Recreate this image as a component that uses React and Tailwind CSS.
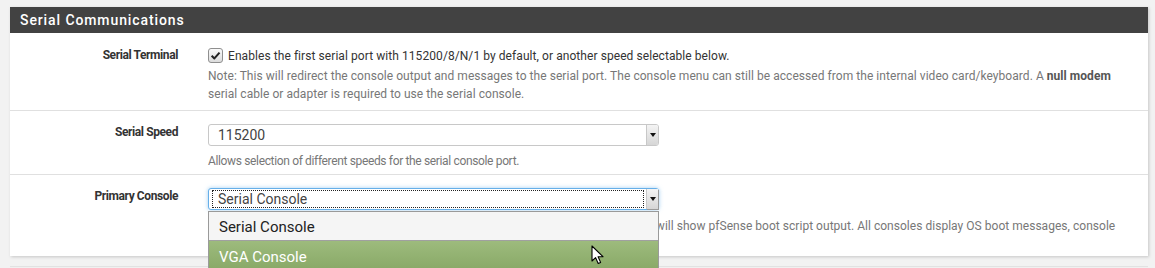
const font = { fontFamily: "Roboto, 'Liberation Sans', sans-serif" };

const Arrow = () => (
    <div className="flex h-full w-[12px] shrink-0 items-center justify-center border-l border-[#c8c8c8] bg-gradient-to-b from-[#f4f4f4] to-[#d6d6d6] shadow-[1px_1px_0_#9a9a9a]">
        <div className="h-0 w-0 border-x-[3px] border-t-[4px] border-x-transparent border-t-[#111]"></div>
    </div>
);

const Label = ({ children }) => (
    <div className="w-[168px] shrink-0 text-right text-[12px] leading-[14px] font-bold tracking-[-0.4px] text-[#333]">
        {children}
    </div>
);

const App = () => {
    return (
        <div className="h-[268px] w-[1155px] overflow-hidden bg-[#f2f2f2] pt-[7px] pl-[10px]" style={font}>
            <div className="relative w-[1138px] bg-white shadow-[1px_1px_3px_rgba(0,0,0,0.18)]">
                <div className="flex h-[26px] items-center bg-[#424242] px-[10px] text-[14px] font-medium tracking-[0.9px] text-white">
                    Serial Communications
                </div>

                {/* serial terminal */}
                <div className="flex border-b border-[#e0e0e0] pt-[14px] pb-[7px]">
                    <div className="pt-[1px]">
                        <Label>Serial Terminal</Label>
                    </div>
                    <div className="ml-[30px] min-w-0 flex-1 pr-[20px]">
                        <div className="flex h-[17px] items-center gap-[5px] text-[12px] tracking-[0.07px] text-[#333]">
                            <div className="flex h-[15px] w-[15px] items-center justify-center rounded-[3px] border border-[#8f8f8f] bg-gradient-to-b from-[#fafafa] to-[#dcdcdc]">
                                <svg viewBox="0 0 12 12" className="h-[11px] w-[11px]">
                                    <path d="M1.8 6.2 L4.8 9.2 L10.4 2.8" fill="none" stroke="#222" strokeWidth="2.2" strokeLinejoin="round" />
                                </svg>
                            </div>
                            <span>Enables the first serial port with 115200/8/N/1 by default, or another speed selectable below.</span>
                        </div>
                        <p className="mt-[3px] text-[12px] leading-[18px] tracking-[0.05px] text-[#777]">
                            Note: This will redirect the console output and messages to the serial port. The console menu can still be accessed from the internal video card/keyboard. A{" "}
                            <b className="text-[#555]">null modem</b> serial cable or adapter is required to use the serial console.
                        </p>
                    </div>
                </div>

                {/* serial speed */}
                <div className="flex border-b border-[#e0e0e0] pt-[13px] pb-[4px]">
                    <div className="pt-[1px]">
                        <Label>Serial Speed</Label>
                    </div>
                    <div className="ml-[30px] min-w-0 flex-1 pr-[20px]">
                        <div className="flex h-[22px] w-[451px] items-center overflow-hidden rounded-[3px] border border-[#c8c8c8] bg-white">
                            <span className="flex-1 pl-[9px] text-[14px] text-[#444]">115200</span>
                            <Arrow />
                        </div>
                        <p className="mt-[6px] text-[12px] leading-[18px] tracking-[-0.35px] text-[#777]">
                            Allows selection of different speeds for the serial console port.
                        </p>
                    </div>
                </div>

                {/* primary console */}
                <div className="flex pt-[13px] pb-[3px]">
                    <div className="pt-[1px]">
                        <Label>Primary Console</Label>
                    </div>
                    <div className="relative ml-[30px] min-w-0 flex-1 pr-[20px]">
                        <div className="flex h-[22px] w-[451px] items-center rounded-[3px] border border-[#66afe9] bg-white shadow-[0_0_4px_rgba(102,175,233,0.6)]">
                            <div className="ml-[3px] flex h-[18px] flex-1 items-center border border-dotted border-[#222] pl-[5px] text-[14px] text-[#444]">
                                Serial Console
                            </div>
                            <div className="ml-[2px] h-full">
                                <Arrow />
                            </div>
                        </div>
                        <p className="mt-[7px] text-[12px] leading-[18px] tracking-[0.03px] text-[#777]">
                            Select the preferred console if multiple consoles are present. The preferred console will show pfSense boot script output. All consoles display OS boot messages, console messages, and the console menu.
                        </p>

                        {/* open dropdown */}
                        <div className="absolute top-[23px] left-0 w-[451px] border border-[#9a9a9a] bg-[#f5f5f5] text-[15px]">
                            <div className="flex h-[29px] items-center border-b border-[#a0a0a0] pt-[3px] pl-[10px] text-[#222]">Serial Console</div>
                            <div className="flex h-[30px] items-center bg-gradient-to-b from-[#9dbb7d] to-[#88a866] pt-[3px] pl-[10px] text-white">
                                VGA Console
                            </div>
                            <svg className="absolute top-[33px] left-[382px]" width="14" height="20" viewBox="0 0 14 20">
                                <path d="M1 1 L1 16 L4.6 12.6 L7.2 18.5 L9.6 17.4 L7.1 11.7 L12 11.7 Z" fill="#fff" stroke="#000" strokeWidth="1.1" strokeLinejoin="round" />
                            </svg>
                        </div>
                    </div>
                </div>
            </div>
            <div className="mt-[10px] h-[4px] w-[1138px] border-t border-[#e2e2e2] bg-[#f0f0f0]"></div>
        </div>
    );
};

export default App;
